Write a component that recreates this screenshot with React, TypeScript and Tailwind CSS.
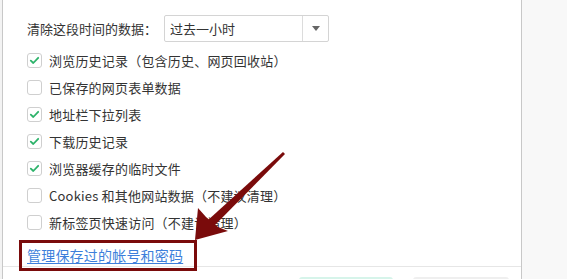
import React from 'react';

const items = [
  { label: '浏览历史记录（包含历史、网页回收站）', checked: true },
  { label: '已保存的网页表单数据', checked: false },
  { label: '地址栏下拉列表', checked: true },
  { label: '下载历史记录', checked: true },
  { label: '浏览器缓存的临时文件', checked: true },
  { label: 'Cookies 和其他网站数据（不建议清理）', checked: false },
  { label: '新标签页快速访问（不建议清理）', checked: false },
];

const font = { fontFamily: '"Noto Sans CJK SC", "Noto Sans", sans-serif' };

function CheckBox({ checked }: { checked: boolean }) {
  return (
    <span className="flex h-[15px] w-[15px] shrink-0 items-center justify-center rounded-[3px] border border-[#cfcfcf] bg-white">
      {checked && (
        <svg width="11" height="11" viewBox="0 0 11 11">
          <path d="M1.8 5.6 L4.3 8 L9.2 2.8" fill="none" stroke="#2db36a" strokeWidth="1.8" strokeLinecap="round" strokeLinejoin="round" />
        </svg>
      )}
    </span>
  );
}

export default function App() {
  return (
    <div className="relative flex h-[279px] w-[567px] overflow-hidden bg-white text-[#333]" style={font}>
      <div className="w-[2px] shrink-0 bg-[#f3f3f3]" />
      <div className="flex w-[520px] shrink-0 flex-col border-x border-[#c8c8c8] bg-white">
        <div className="h-[266px] pl-[24px] pt-[15px]">
          <div className="flex items-center">
            <span className="w-[137px] text-[13px] leading-none">清除这段时间的数据：</span>
            <div className="flex h-[27px] w-[165px] items-center rounded-[2px] border border-[#d4d4d4]">
              <span className="flex-1 pl-[5px] text-[13px] leading-none">过去一小时</span>
              <span className="flex h-full w-[26px] items-center justify-center border-l border-[#dcdcdc]">
                <svg width="8" height="5" viewBox="0 0 8 5">
                  <path d="M0 0 H8 L4 5 Z" fill="#666" />
                </svg>
              </span>
            </div>
          </div>
          <div className="mt-[5px] flex flex-col">
            {items.map((it) => (
              <div key={it.label} className="flex h-[27px] items-center gap-[7px]">
                <CheckBox checked={it.checked} />
                <span className="text-[13px] leading-none tracking-[0.2px]">{it.label}</span>
              </div>
            ))}
          </div>
          <div className="mt-[7px] flex h-[24px] items-center">
            <a className="text-[14px] leading-none tracking-[0.2px] text-[#3d7fdb] underline underline-offset-2">管理保存过的帐号和密码</a>
          </div>
        </div>
        <div className="flex flex-1 gap-[20px] border-t border-[#e6e6e6] pl-[296px] pt-[10px]">
          <div className="h-[20px] w-[94px] rounded-[3px] bg-[#d6f4ea]" />
          <div className="h-[20px] w-[96px] rounded-[3px] bg-[#efefef]" />
        </div>
      </div>
      <div className="flex-1 bg-[#f8f8f8]" />

      <div className="pointer-events-none absolute left-[19px] top-[240px] h-[31px] w-[178px] border-[3px] border-[#7a0b0b]" />
      <svg className="pointer-events-none absolute left-0 top-0" width="567" height="279" viewBox="0 0 567 279">
        <path d="M283 152 L285 154 L214 226 L207 221 Z" fill="#7a0b0b" />
        <path d="M195 240 L198 208 L206 217 L218 227 L228 231 Z" fill="#7a0b0b" />
      </svg>
    </div>
  );
}
